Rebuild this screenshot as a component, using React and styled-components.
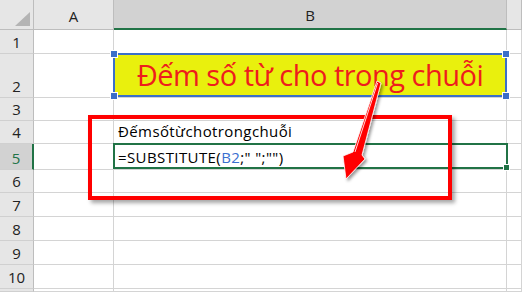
import styled, { createGlobalStyle } from "styled-components";

const GlobalStyle = createGlobalStyle`
    html, body {
        margin: 0;
        padding: 0;
        background: #ffffff;
        overflow: hidden;
    }
`;

const Page = styled.div`
    position: relative;
    width: 522px;
    height: 292px;
    overflow: hidden;
    font-family: "Open Sans", "Noto Sans", sans-serif;
`;

const Sheet = styled.div`
    display: grid;
    grid-template-columns: 34px 80px 393px 1fr;
    grid-template-rows: 30px 24px 44px 23px 23px 26px 23px 24px 24px 24px 24px 1fr;
    width: 522px;
    height: 292px;
`;

const Corner = styled.div`
    background: #e6e6e6;
    border-right: 1px solid #bdbdbd;
    border-bottom: 1px solid #bdbdbd;
    box-sizing: border-box;
    display: flex;
    align-items: flex-end;
    justify-content: flex-end;
    padding: 0 3px 3px 0;
`;

const ColHead = styled.div`
    background: ${(p) => (p.$active ? "#d2d2d2" : "#e6e6e6")};
    border-right: 1px solid #bdbdbd;
    border-bottom: ${(p) => (p.$active ? "2px solid #217346" : "1px solid #bdbdbd")};
    box-sizing: border-box;
    display: flex;
    align-items: center;
    justify-content: center;
    font-size: 15px;
    color: #222;
    padding-top: 2px;
`;

const RowHead = styled.div`
    background: ${(p) => (p.$active ? "#d2d2d2" : "#e6e6e6")};
    border-right: ${(p) => (p.$active ? "2px solid #217346" : "1px solid #bdbdbd")};
    border-bottom: 1px solid #d0d0d0;
    box-sizing: border-box;
    display: flex;
    align-items: flex-end;
    justify-content: center;
    padding-bottom: 1px;
    font-size: 15px;
    color: ${(p) => (p.$active ? "#217346" : "#222")};
`;

const Cell = styled.div`
    border-right: 1px solid #d4d4d4;
    border-bottom: 1px solid #d4d4d4;
    box-sizing: border-box;
    display: flex;
    align-items: flex-end;
    padding: 0 0 2px 4px;
    font-size: 15px;
    color: #000;
    white-space: nowrap;
    letter-spacing: 0.4px;
`;

const Ref = styled.span`
    color: #3a6fd0;
`;

const TextBox = styled.div`
    position: absolute;
    left: 113px;
    top: 53px;
    width: 394px;
    height: 44px;
    box-sizing: border-box;
    border: 2px solid #3b6fc9;
    background: #e9f00d;
    display: flex;
    align-items: center;
    justify-content: center;
    color: #ee1d1d;
    font-size: 29px;
    letter-spacing: -0.5px;
    padding-bottom: 2px;
`;

const Handle = styled.span`
    position: absolute;
    width: 6px;
    height: 6px;
    background: #3b6fc9;
    border: 1px solid #ffffff;
    ${(p) => (p.$left ? "left: -5px;" : "right: -5px;")}
    ${(p) => (p.$top ? "top: -5px;" : "bottom: -5px;")}
`;

const Selection = styled.div`
    position: absolute;
    left: 113px;
    top: 143px;
    width: 395px;
    height: 26px;
    box-sizing: border-box;
    border: 2px solid #217346;
`;

const FillHandle = styled.span`
    position: absolute;
    right: -4px;
    bottom: -4px;
    width: 5px;
    height: 5px;
    background: #217346;
    border: 1px solid #fff;
`;

const RedFrame = styled.div`
    position: absolute;
    left: 88px;
    top: 115px;
    width: 364px;
    height: 85px;
    box-sizing: border-box;
    border: 4px solid #ff0000;
    box-shadow: 3px 3px 4px rgba(0, 0, 0, 0.35);
`;

const Overlay = styled.svg`
    position: absolute;
    left: 0;
    top: 0;
    pointer-events: none;
`;

const rows = [
    { n: 1 },
    { n: 2 },
    { n: 3 },
    { n: 4, b: "Đếmsốtừchotrongchuỗi" },
    { n: 5, active: true, formula: true },
    { n: 6 },
    { n: 7 },
    { n: 8 },
    { n: 9 },
    { n: 10 },
    { n: "" },
];

const App = () => {
    return (
        <Page>
            <GlobalStyle />
            <Sheet>
                <Corner>
                    <svg width="15" height="14" viewBox="0 0 15 14">
                        <polygon points="15,0 15,14 0,14" fill="#b4b4b4" />
                    </svg>
                </Corner>
                <ColHead>A</ColHead>
                <ColHead $active>B</ColHead>
                <ColHead />
                {rows.map((row, i) => (
                    <>
                        <RowHead key={"h" + i} $active={row.active}>
                            {row.n}
                        </RowHead>
                        <Cell key={"a" + i} />
                        <Cell key={"b" + i}>
                            {row.b}
                            {row.formula && (
                                <>
                                    =SUBSTITUTE(<Ref>B2</Ref>;" ";"")
                                </>
                            )}
                        </Cell>
                        <Cell key={"c" + i} />
                    </>
                ))}
            </Sheet>

            <Selection>
                <FillHandle />
            </Selection>

            <RedFrame />

            <TextBox>
                Đếm số từ cho trong chuỗi
                <Handle $left $top />
                <Handle $top />
                <Handle $left />
                <Handle />
            </TextBox>

            <Overlay width="522" height="292" viewBox="0 0 522 292">
                <defs>
                    <filter id="sh" x="-50%" y="-50%" width="200%" height="200%">
                        <feDropShadow dx="2" dy="2" stdDeviation="1.5" floodColor="#000" floodOpacity="0.4" />
                    </filter>
                </defs>
                <g filter="url(#sh)">
                    <polygon
                        points="377,81 381,83 362,155 365,159 346,179 343,156 353,152"
                        fill="#ff0000"
                        stroke="#ffffff"
                        strokeWidth="0.8"
                        strokeLinejoin="round"
                    />
                    <line x1="377.6" y1="83" x2="355" y2="152" stroke="#ffffff" strokeWidth="1" opacity="0.85" />
                </g>
            </Overlay>
        </Page>
    );
};

export default App;
